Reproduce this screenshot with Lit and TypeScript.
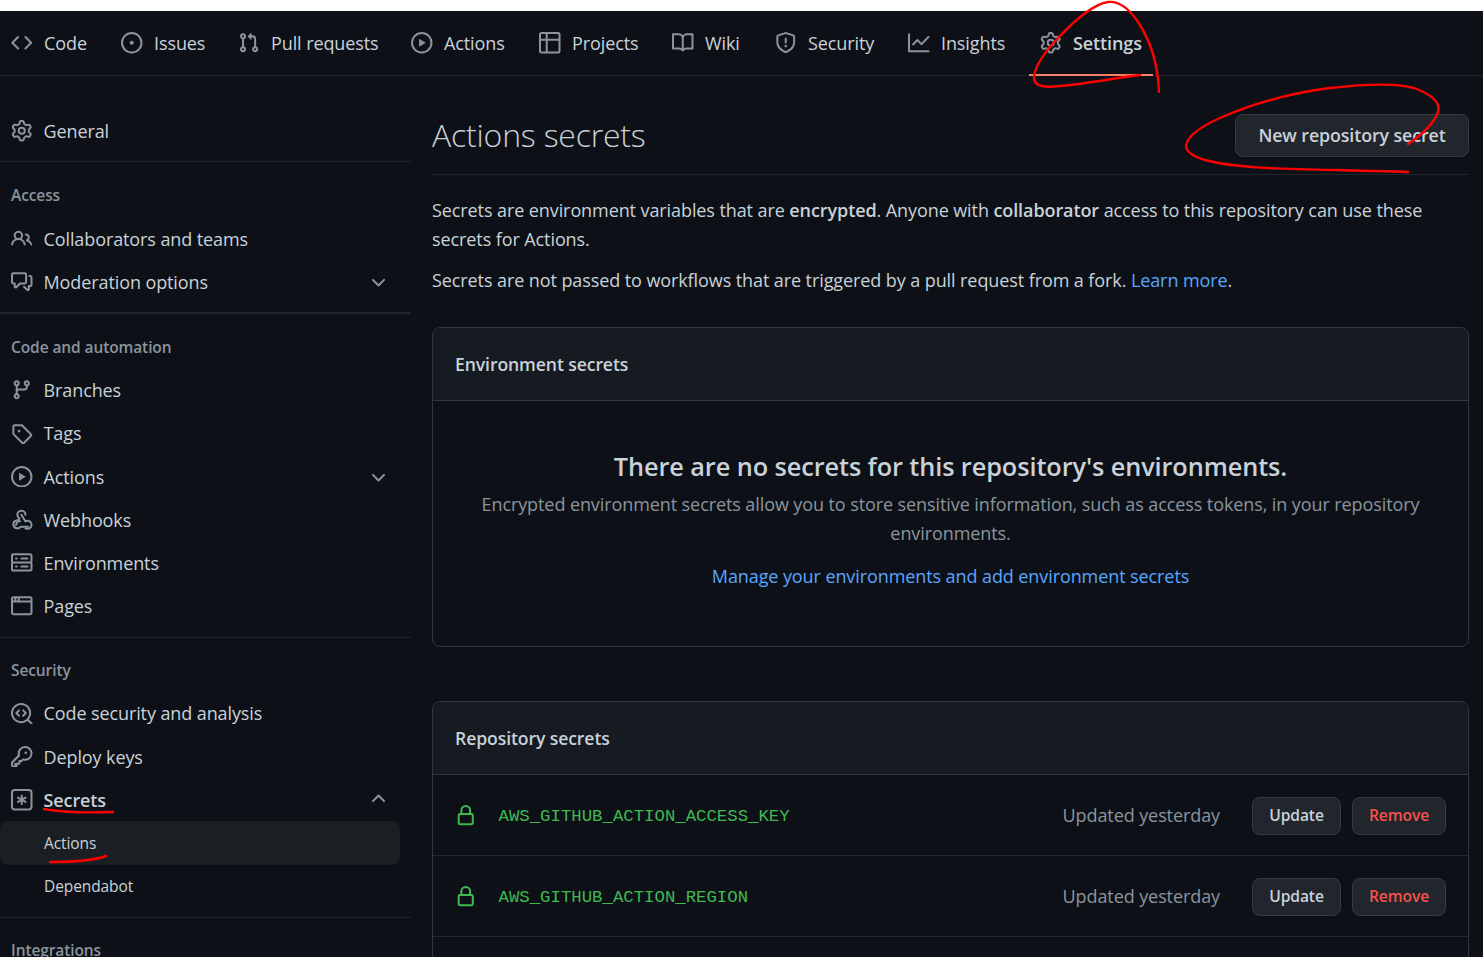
import { LitElement, html, css, svg } from "lit";
import { customElement } from "lit/decorators.js";

const I: Record<string, any> = {
  code: svg`<path d="M4.72 3.22a.75.75 0 011.06 1.06L2.06 8l3.72 3.72a.75.75 0 11-1.06 1.06L.47 8.53a.75.75 0 010-1.06l4.25-4.25zm6.56 0a.75.75 0 10-1.06 1.06L13.94 8l-3.72 3.72a.75.75 0 101.06 1.06l4.25-4.25a.75.75 0 000-1.06l-4.25-4.25z"/>`,
  issue: svg`<path d="M8 9.5a1.5 1.5 0 100-3 1.5 1.5 0 000 3z"/><path fill-rule="evenodd" d="M8 0a8 8 0 100 16A8 8 0 008 0zM1.5 8a6.5 6.5 0 1113 0 6.5 6.5 0 01-13 0z"/>`,
  pr: svg`<path fill-rule="evenodd" d="M7.177 3.073L9.573.677A.25.25 0 0110 .854v4.792a.25.25 0 01-.427.177L7.177 3.427a.25.25 0 010-.354zM3.75 2.5a.75.75 0 100 1.5.75.75 0 000-1.5zm-2.25.75a2.25 2.25 0 113 2.122v5.256a2.251 2.251 0 11-1.5 0V5.372A2.25 2.25 0 011.5 3.25zM11 2.5h-1V4h1a1 1 0 011 1v5.628a2.251 2.251 0 101.5 0V5A2.5 2.5 0 0011 2.5zm1 10.25a.75.75 0 111.5 0 .75.75 0 01-1.5 0zM3.75 12a.75.75 0 100 1.5.75.75 0 000-1.5z"/>`,
  play: svg`<path fill-rule="evenodd" d="M1.5 8a6.5 6.5 0 1113 0 6.5 6.5 0 01-13 0zM8 0a8 8 0 100 16A8 8 0 008 0zM6.379 5.227A.25.25 0 006 5.442v5.117a.25.25 0 00.379.214l4.264-2.559a.25.25 0 000-.428L6.379 5.227z"/>`,
  table: svg`<path fill-rule="evenodd" d="M0 1.75C0 .784.784 0 1.75 0h12.5C15.216 0 16 .784 16 1.75v12.5A1.75 1.75 0 0114.25 16H1.75A1.75 1.75 0 010 14.25V1.75zM1.5 6.5v7.75c0 .138.112.25.25.25H5v-8H1.5zM5 5H1.5V1.75a.25.25 0 01.25-.25H5V5zm1.5 1.5v8h7.75a.25.25 0 00.25-.25V6.5h-8zm8-1.5h-8V1.5h7.75a.25.25 0 01.25.25V5z"/>`,
  book: svg`<path fill-rule="evenodd" d="M0 1.75A.75.75 0 01.75 1h4.253c1.227 0 2.317.59 3 1.501A3.744 3.744 0 0111.006 1h4.245a.75.75 0 01.75.75v10.5a.75.75 0 01-.75.75h-4.507a2.25 2.25 0 00-1.591.659l-.622.621a.75.75 0 01-1.06 0l-.622-.621A2.25 2.25 0 005.258 13H.75a.75.75 0 01-.75-.75V1.75zm8.755 3a2.25 2.25 0 012.25-2.25H14.5v9h-3.757c-.71 0-1.4.201-1.992.572l.004-7.322zm-1.504 7.324l.004-5.073-.002-2.253A2.25 2.25 0 005.003 2.5H1.5v9h3.757a3.75 3.75 0 011.994.574z"/>`,
  shield: svg`<path fill-rule="evenodd" d="M7.467.133a1.75 1.75 0 011.066 0l5.25 1.68A1.75 1.75 0 0115 3.48V7c0 1.566-.32 3.182-1.303 4.682-.983 1.498-2.585 2.813-5.032 3.855a1.7 1.7 0 01-1.33 0c-2.447-1.042-4.049-2.357-5.032-3.855C1.32 10.182 1 8.566 1 7V3.48a1.75 1.75 0 011.217-1.667l5.25-1.68zm.61 1.429a.25.25 0 00-.153 0l-5.25 1.68a.25.25 0 00-.174.238V7c0 1.358.275 2.666 1.057 3.86.784 1.194 2.121 2.34 4.366 3.297a.2.2 0 00.154 0c2.245-.956 3.582-2.104 4.366-3.298C13.225 9.666 13.5 8.36 13.5 7V3.48a.25.25 0 00-.174-.237l-5.25-1.68zM9 10.5a1 1 0 11-2 0 1 1 0 012 0zm-.25-5.75a.75.75 0 10-1.5 0v3a.75.75 0 001.5 0v-3z"/>`,
  graph: svg`<path fill-rule="evenodd" d="M1.5 1.75a.75.75 0 00-1.5 0v12.5c0 .414.336.75.75.75h14.5a.75.75 0 000-1.5H1.5V1.75zm14.28 2.53a.75.75 0 00-1.06-1.06L10 7.94 7.53 5.47a.75.75 0 00-1.06 0L3.22 8.72a.75.75 0 001.06 1.06L7 7.06l2.47 2.47a.75.75 0 001.06 0l5.25-5.25z"/>`,
  gear: svg`<path fill-rule="evenodd" d="M7.429 1.525a6.593 6.593 0 011.142 0c.036.003.108.036.137.146l.289 1.105c.147.56.55.967.997 1.189.174.086.341.183.501.29.417.278.97.423 1.53.27l1.102-.303c.11-.03.175.016.195.046.219.31.41.641.573.989.014.031.022.11-.059.19l-.815.806c-.411.406-.562.957-.53 1.456a4.588 4.588 0 010 .582c-.032.499.119 1.05.53 1.456l.815.806c.08.08.073.159.059.19a6.494 6.494 0 01-.573.99c-.02.029-.086.074-.195.045l-1.103-.303c-.559-.153-1.112-.008-1.529.27-.16.107-.327.204-.5.29-.449.222-.851.628-.998 1.189l-.289 1.105c-.029.11-.101.143-.137.146a6.613 6.613 0 01-1.142 0c-.036-.003-.108-.037-.137-.146l-.289-1.105c-.147-.56-.55-.967-.997-1.189a4.502 4.502 0 01-.501-.29c-.417-.278-.97-.423-1.53-.27l-1.102.303c-.11.03-.175-.016-.195-.046a6.492 6.492 0 01-.573-.989c-.014-.031-.022-.11.059-.19l.815-.806c.411-.406.562-.957.53-1.456a4.587 4.587 0 010-.582c.032-.499-.119-1.05-.53-1.456l-.815-.806c-.08-.08-.073-.159-.059-.19a6.44 6.44 0 01.573-.99c.02-.029.086-.075.195-.045l1.103.303c.559.153 1.112.008 1.529-.27.16-.107.327-.204.5-.29.449-.222.851-.628.998-1.189l.289-1.105c.029-.11.101-.143.137-.146zM8 0c-.236 0-.47.01-.701.03-.743.065-1.29.615-1.458 1.261l-.29 1.106c-.017.066-.078.158-.211.224a5.994 5.994 0 00-.668.386c-.123.082-.233.09-.3.071L3.27 2.776c-.644-.177-1.392.02-1.82.63a7.977 7.977 0 00-.704 1.217c-.315.675-.111 1.422.363 1.891l.815.806c.05.048.098.147.088.294a6.084 6.084 0 000 .772c.01.147-.038.246-.088.294l-.815.806c-.474.469-.678 1.216-.363 1.891.2.428.436.835.704 1.218.428.609 1.176.806 1.82.63l1.103-.303c.066-.019.176-.011.299.071.213.143.436.272.668.386.133.066.194.158.212.224l.289 1.106c.169.646.715 1.196 1.458 1.26a8.094 8.094 0 001.402 0c.743-.064 1.29-.614 1.458-1.26l.29-1.106c.017-.066.078-.158.211-.224a5.98 5.98 0 00.668-.386c.123-.082.233-.09.3-.071l1.102.302c.644.177 1.392-.02 1.82-.63.268-.382.505-.789.704-1.217.315-.675.111-1.422-.364-1.891l-.814-.806c-.05-.048-.098-.147-.088-.294a6.1 6.1 0 000-.772c-.01-.147.039-.246.088-.294l.814-.806c.475-.469.679-1.216.364-1.891a7.992 7.992 0 00-.704-1.218c-.428-.609-1.176-.806-1.82-.63l-1.103.303c-.066.019-.176.011-.299-.071a5.991 5.991 0 00-.668-.386c-.133-.066-.194-.158-.212-.224L10.16 1.29C9.99.645 9.444.095 8.701.031A8.094 8.094 0 008 0zm1.5 8a1.5 1.5 0 11-3 0 1.5 1.5 0 013 0zM11 8a3 3 0 11-6 0 3 3 0 016 0z"/>`,
  people: svg`<path fill-rule="evenodd" d="M5.5 3.5a2 2 0 100 4 2 2 0 000-4zM2 5.5a3.5 3.5 0 115.898 2.549 5.507 5.507 0 013.034 4.084.75.75 0 11-1.482.235 4.001 4.001 0 00-7.9 0 .75.75 0 01-1.482-.236A5.507 5.507 0 013.102 8.05 3.49 3.49 0 012 5.5zM11 4a.75.75 0 100 1.5 1.5 1.5 0 01.666 2.844.75.75 0 00-.416.672v.352a.75.75 0 00.574.73c1.2.289 2.162 1.2 2.522 2.372a.75.75 0 101.434-.44 5.01 5.01 0 00-2.56-3.012A3 3 0 0011 4z"/>`,
  comment: svg`<path fill-rule="evenodd" d="M1.5 2.75a.25.25 0 01.25-.25h8.5a.25.25 0 01.25.25v5.5a.25.25 0 01-.25.25h-3.5a.75.75 0 00-.53.22L3.5 11.44V9.25a.75.75 0 00-.75-.75h-1a.25.25 0 01-.25-.25v-5.5zM1.75 1A1.75 1.75 0 000 2.75v5.5C0 9.216.784 10 1.75 10H2v1.543a1.457 1.457 0 002.487 1.03L7.061 10h3.189A1.75 1.75 0 0012 8.25v-5.5A1.75 1.75 0 0010.25 1h-8.5zM14.5 4.75a.25.25 0 00-.25-.25h-.5a.75.75 0 110-1.5h.5c.966 0 1.75.784 1.75 1.75v5.5A1.75 1.75 0 0114.25 12H14v1.543a1.457 1.457 0 01-2.487 1.03L9.22 12.28a.75.75 0 111.06-1.06l2.22 2.22v-2.19a.75.75 0 01.75-.75h1a.25.25 0 00.25-.25v-5.5z"/>`,
  branch: svg`<path fill-rule="evenodd" d="M11.75 2.5a.75.75 0 100 1.5.75.75 0 000-1.5zm-2.25.75a2.25 2.25 0 113 2.122V6A2.5 2.5 0 0110 8.5H6a1 1 0 00-1 1v1.128a2.251 2.251 0 11-1.5 0V5.372a2.25 2.25 0 111.5 0v1.836A2.492 2.492 0 016 7h4a1 1 0 001-1v-.628A2.25 2.25 0 019.5 3.25zM4.25 12a.75.75 0 100 1.5.75.75 0 000-1.5zM3.5 3.25a.75.75 0 111.5 0 .75.75 0 01-1.5 0z"/>`,
  tag: svg`<path fill-rule="evenodd" d="M2.5 7.775V2.75a.25.25 0 01.25-.25h5.025a.25.25 0 01.177.073l6.25 6.25a.25.25 0 010 .354l-5.025 5.025a.25.25 0 01-.354 0l-6.25-6.25a.25.25 0 01-.073-.177zm-1.5 0V2.75C1 1.784 1.784 1 2.75 1h5.025c.464 0 .91.184 1.238.513l6.25 6.25a1.75 1.75 0 010 2.474l-5.026 5.026a1.75 1.75 0 01-2.474 0l-6.25-6.25A1.75 1.75 0 011 7.775zM6 5a1 1 0 100 2 1 1 0 000-2z"/>`,
  webhook: svg`<path d="M5.5 4.25a2.25 2.25 0 014.5 0 .75.75 0 001.5 0 3.75 3.75 0 10-6.14 2.889l-2.272 4.258a.75.75 0 001.324.706L7 7.25a.75.75 0 00-.309-1.015A2.25 2.25 0 015.5 4.25z"/><path d="M7.364 3.607a.75.75 0 011.03.257l2.608 4.349a3.75 3.75 0 11-.628 6.785.75.75 0 01.752-1.299 2.25 2.25 0 10-.033-3.88.75.75 0 01-1.03-.256L7.107 4.636a.75.75 0 01.257-1.03z"/><path d="M2.5 11.5a2.25 2.25 0 013.75-1.677.75.75 0 001-1.118A3.75 3.75 0 001 11.5a3.75 3.75 0 006.5 2.5h5.25a.75.75 0 000-1.5H7a.75.75 0 00-.7.48A2.25 2.25 0 012.5 11.5z"/>`,
  server: svg`<path fill-rule="evenodd" d="M1.75 1A1.75 1.75 0 000 2.75v4c0 .372.116.717.314 1a1.742 1.742 0 00-.314 1v4c0 .966.784 1.75 1.75 1.75h12.5A1.75 1.75 0 0016 12.75v-4c0-.372-.116-.717-.314-1 .198-.283.314-.628.314-1v-4A1.75 1.75 0 0014.25 1H1.75zm0 7.5a.25.25 0 00-.25.25v4c0 .138.112.25.25.25h12.5a.25.25 0 00.25-.25v-4a.25.25 0 00-.25-.25H1.75zM1.5 2.75a.25.25 0 01.25-.25h12.5a.25.25 0 01.25.25v4a.25.25 0 01-.25.25H1.75a.25.25 0 01-.25-.25v-4zm5.5 2A.75.75 0 017.75 4h4.5a.75.75 0 010 1.5h-4.5A.75.75 0 017 4.75zM7.75 10a.75.75 0 000 1.5h4.5a.75.75 0 000-1.5h-4.5zM3 4.75A.75.75 0 013.75 4h.5a.75.75 0 010 1.5h-.5A.75.75 0 013 4.75zM3.75 10a.75.75 0 000 1.5h.5a.75.75 0 000-1.5h-.5z"/>`,
  browser: svg`<path fill-rule="evenodd" d="M0 2.75C0 1.784.784 1 1.75 1h12.5c.966 0 1.75.784 1.75 1.75v10.5A1.75 1.75 0 0114.25 15H1.75A1.75 1.75 0 010 13.25V2.75zm1.75-.25a.25.25 0 00-.25.25V4h1V2.5h-.75zM4 2.5V4h1V2.5H4zm2.5 0V4h8V2.75a.25.25 0 00-.25-.25H6.5zM14.5 5.5h-13v7.75c0 .138.112.25.25.25h12.5a.25.25 0 00.25-.25V5.5z"/>`,
  scan: svg`<path d="M8.47 4.97a.75.75 0 000 1.06L9.94 7.5 8.47 8.97a.75.75 0 101.06 1.06l2-2a.75.75 0 000-1.06l-2-2a.75.75 0 00-1.06 0zM6.53 6.03a.75.75 0 00-1.06-1.06l-2 2a.75.75 0 000 1.06l2 2a.75.75 0 101.06-1.06L5.06 7.5l1.47-1.47z"/><path fill-rule="evenodd" d="M12.246 13.307a7.5 7.5 0 111.06-1.06l2.474 2.473a.75.75 0 11-1.06 1.06l-2.474-2.473zM1.5 7.5a6 6 0 1110.386 4.094.75.75 0 00-.292.293A6 6 0 011.5 7.5z"/>`,
  key: svg`<path fill-rule="evenodd" d="M6.5 5.5a4 4 0 112.731 3.795.75.75 0 00-.768.18L7.44 10.5H6.25a.75.75 0 00-.75.75v1.19l-.06.06H3.25a.75.75 0 00-.75.75v1.19l-.06.06H1.75a.25.25 0 01-.25-.25v-1.69l5.024-5.023a.75.75 0 00.181-.768A3.995 3.995 0 016.5 5.5zm4-5.5a5.5 5.5 0 00-5.348 6.788L.22 11.72a.75.75 0 00-.22.53v2C0 15.216.784 16 1.75 16h2a.75.75 0 00.53-.22l.5-.5a.75.75 0 00.22-.53V14h.75a.75.75 0 00.53-.22l.5-.5a.75.75 0 00.22-.53V12h.75a.75.75 0 00.53-.22l.932-.932A5.5 5.5 0 1010.5 0zm.5 6a1 1 0 100-2 1 1 0 000 2z"/>`,
  asterisk: svg`<path fill-rule="evenodd" d="M0 2.75A2.75 2.75 0 012.75 0h10.5A2.75 2.75 0 0116 2.75v10.5A2.75 2.75 0 0113.25 16H2.75A2.75 2.75 0 010 13.25V2.75zM2.75 1.5c-.69 0-1.25.56-1.25 1.25v10.5c0 .69.56 1.25 1.25 1.25h10.5c.69 0 1.25-.56 1.25-1.25V2.75c0-.69-.56-1.25-1.25-1.25H2.75z"/><path d="M8 4a.75.75 0 01.75.75V6.7l1.69-.975a.75.75 0 01.75 1.3L9.5 8l1.69.976a.75.75 0 01-.75 1.298L8.75 9.3v1.951a.75.75 0 01-1.5 0V9.299l-1.69.975a.75.75 0 01-.75-1.298L6.5 8l-1.69-.975a.75.75 0 01.75-1.3l1.69.976V4.75A.75.75 0 018 4z"/>`,
  lock: svg`<path fill-rule="evenodd" d="M4 4v2h-.25A1.75 1.75 0 002 7.75v5.5c0 .966.784 1.75 1.75 1.75h8.5A1.75 1.75 0 0014 13.25v-5.5A1.75 1.75 0 0012.25 6H12V4a4 4 0 10-8 0zm6.5 2V4a2.5 2.5 0 00-5 0v2h5zM12 7.5h.25a.25.25 0 01.25.25v5.5a.25.25 0 01-.25.25h-8.5a.25.25 0 01-.25-.25v-5.5a.25.25 0 01.25-.25H12z"/>`,
  down: svg`<path fill-rule="evenodd" d="M12.78 6.22a.75.75 0 010 1.06l-4.25 4.25a.75.75 0 01-1.06 0L3.22 7.28a.75.75 0 011.06-1.06L8 9.94l3.72-3.72a.75.75 0 011.06 0z"/>`,
  up: svg`<path fill-rule="evenodd" d="M3.22 9.78a.75.75 0 010-1.06l4.25-4.25a.75.75 0 011.06 0l4.25 4.25a.75.75 0 01-1.06 1.06L8 6.06 4.28 9.78a.75.75 0 01-1.06 0z"/>`,
};

const icon = (n: string) => html`<svg class="ico" viewBox="0 0 16 16" aria-hidden="true">${I[n]}</svg>`;

const tabs: [string, string, number][] = [
  ["code", "Code", 43], ["issue", "Issues", 50], ["pr", "Pull requests", 106], ["play", "Actions", 61], ["table", "Projects", 66],
  ["book", "Wiki", 36], ["shield", "Security", 66], ["graph", "Insights", 65], ["gear", "Settings", 69],
];

type Row = { i?: string; t: string; c?: string; cls?: string };
const groups: { h?: string; rows: Row[] }[] = [
  { rows: [{ i: "gear", t: "General" }] },
  { h: "Access", rows: [{ i: "people", t: "Collaborators and teams" }, { i: "comment", t: "Moderation options", c: "down" }] },
  { h: "Code and automation", rows: [
    { i: "branch", t: "Branches" }, { i: "tag", t: "Tags" }, { i: "play", t: "Actions", c: "down" },
    { i: "webhook", t: "Webhooks" }, { i: "server", t: "Environments" }, { i: "browser", t: "Pages" }] },
  { h: "Security", rows: [
    { i: "scan", t: "Code security and analysis" }, { i: "key", t: "Deploy keys" },
    { i: "asterisk", t: "Secrets", c: "up", cls: "strong" },
    { t: "Actions", cls: "sub sel" }, { t: "Dependabot", cls: "sub" }] },
  { h: "Integrations", rows: [] },
];

const secrets = ["AWS_GITHUB_ACTION_ACCESS_KEY", "AWS_GITHUB_ACTION_REGION"];

@customElement("app-root")
export class AppRoot extends LitElement {
  static styles = css`
    :host {
      display: block; position: relative; height: 957px; overflow: hidden;
      background: #0d1117; color: #c9d1d9;
      font-family: "Open Sans", "Noto Sans", sans-serif; font-size: 18px; letter-spacing: -0.1px;
    }
    * { box-sizing: border-box; }
    .ico { width: 21.5px; height: 21.5px; fill: #8b949e; flex: none; display: block; }
    .topstrip { height: 11px; background: #fff; }
    nav.tabs {
      height: 65px; display: flex; gap: 12px; align-items: stretch;
      border-bottom: 1.5px solid #21262d;
    }
    .tab { display: flex; align-items: center; gap: 11.5px; padding: 0 11px; position: relative; white-space: nowrap; }
    .tab.on { font-weight: 600; }
    .tab.on::after { content: ""; position: absolute; left: 0; right: 0; bottom: -1px; height: 2px; background: #f78166; }
    .layout { display: flex; gap: 21px; padding-right: 14px; padding-top: 34px; }
    aside { width: 411px; flex: none; margin-top: -0.4px; }
    .group { padding-bottom: 9px; border-bottom: 1px solid #21262d; margin-bottom: 11px; }
    .group:first-child { padding-bottom: 8px; margin-bottom: 12px; }
    .group.last { border: 0; }
    .group.thick { border-bottom-width: 2px; }
    .heading { height: 43.2px; display: flex; align-items: center; padding-left: 11px; font-size: 15.5px; font-weight: 600; color: #8b949e; }
    .row { height: 43.2px; width: 400px; display: flex; align-items: center; gap: 11px; padding: 0 11px; border-radius: 8px; white-space: nowrap; }
    .row .name { flex: 1; }
    .row .chev { width: 21px; height: 21px; fill: #8b949e; }
    .row.strong .name { font-weight: 600; }
    .row.sub { padding-left: 44px; font-size: 15.5px; }
    .row.sel { background: #1a1f24; }
    main { flex: 1; min-width: 0; letter-spacing: -0.09px; }
    .head {
      display: flex; justify-content: space-between; align-items: flex-start;
      height: 65px; padding-top: 4px; border-bottom: 1px solid #21262d;
    }
    h1 { margin: 0; font-size: 32px; line-height: 41px; font-weight: 300; color: #c9d1d9; letter-spacing: -0.2px; }
    .btn {
      background: #21262d; border: 1.3px solid #363b42; border-radius: 8px; color: #c9d1d9;
      font-weight: 600; display: flex; align-items: center; justify-content: center; white-space: nowrap;
    }
    .btn.big { width: 234px; height: 43px; font-size: 17.8px; padding-bottom: 2px; }
    p { margin: 0; line-height: 29px; }
    .intro { padding-top: 21px; display: flex; flex-direction: column; gap: 12px; }
    a { color: #58a6ff; text-decoration: none; }
    b { font-weight: 600; }
    .box { border: 1px solid #30363d; border-radius: 8px; }
    .box-h { height: 73px; background: #161b22; border-bottom: 1px solid #30363d; border-radius: 8px 8px 0 0; padding-left: 22px; display: flex; align-items: center; font-weight: 600; font-size: 17.6px; letter-spacing: -0.1px; }
    .env { margin-top: 32px; height: 320px; }
    .blank { text-align: center; padding: 47px 40px 0; }
    .blank h3 { margin: 0 0 6px; font-size: 25.3px; font-weight: 600; line-height: 36px; }
    .blank p { color: #8b949e; }
    .blank .link { margin-top: 14px; }
    .repo { margin-top: 54px; min-height: 400px; }
    .sec { height: 81px; border-bottom: 1px solid #21262d; display: flex; align-items: center; padding: 2px 22px 0; }
    .sec .ico { fill: #3fb950; }
    .sec .mono { font-family: "Liberation Mono", monospace; font-size: 17.33px; letter-spacing: 0; color: #3fb950; margin-left: 22px; flex: 1; }
    .sec .when { color: #8b949e; margin-right: 32px; padding-bottom: 2px; }
    .sec .btn { height: 38px; font-size: 15.6px; font-weight: 600; padding-bottom: 2px; }
    .upd { width: 89px; margin-right: 11px; }
    .rem { width: 94px; color: #f85149 !important; }
    svg.ink { position: absolute; inset: 0; width: 1483px; height: 957px; pointer-events: none; }
    svg.ink path { fill: none; stroke: #f00; stroke-width: 2.4; stroke-linecap: round; stroke-linejoin: round; }
  `;

  render() {
    return html`
      <div class="topstrip"></div>
      <nav class="tabs">
        ${tabs.map(([i, t, w]) => html`<div class="tab ${t === "Settings" ? "on" : ""}">${icon(i)}<span style="width:${w}px">${t}</span></div>`)}
      </nav>
      <div class="layout">
        <aside>
          ${groups.map((g, idx) => html`
            <div class="group ${idx === groups.length - 1 ? "last" : ""} ${idx === 1 ? "thick" : ""}">
              ${g.h ? html`<div class="heading">${g.h}</div>` : ""}
              ${g.rows.map((r) => html`
                <div class="row ${r.cls ?? ""}">
                  ${r.i ? icon(r.i) : ""}
                  <span class="name">${r.t}</span>
                  ${r.c ? html`<svg class="ico chev" viewBox="0 0 16 16">${I[r.c]}</svg>` : ""}
                </div>`)}
            </div>`)}
        </aside>
        <main>
          <div class="head">
            <h1>Actions secrets</h1>
            <div class="btn big">New repository secret</div>
          </div>
          <div class="intro">
            <p>Secrets are environment variables that are <b>encrypted</b>. Anyone with <b>collaborator</b> access to this repository can use these secrets for Actions.</p>
            <p>Secrets are not passed to workflows that are triggered by a pull request from a fork. <a>Learn more</a>.</p>
          </div>
          <section class="box env">
            <div class="box-h">Environment secrets</div>
            <div class="blank">
              <h3>There are no secrets for this repository's environments.</h3>
              <p>Encrypted environment secrets allow you to store sensitive information, such as access tokens, in your repository environments.</p>
              <p class="link"><a>Manage your environments and add environment secrets</a></p>
            </div>
          </section>
          <section class="box repo">
            <div class="box-h">Repository secrets</div>
            ${secrets.map((s) => html`
              <div class="sec">
                ${icon("lock")}
                <span class="mono">${s}</span>
                <span class="when">Updated yesterday</span>
                <div class="btn upd">Update</div>
                <div class="btn rem">Remove</div>
              </div>`)}
          </section>
        </main>
      </div>
      <svg class="ink" viewBox="0 0 1483 957">
        <path d="M1159 92C1158 65 1150 40 1138 22C1128 7 1118 1 1108 2C1094 4 1075 20 1058 38C1044 53 1034 68 1034 78C1034 86 1044 88 1060 86C1085 84 1115 78 1140 75"/>
        <path d="M1408 144C1420 136 1433 126 1438 112C1441 102 1430 94 1414 88C1396 83 1365 84 1330 88C1290 93 1250 105 1220 118C1200 127 1187 137 1186 146C1186 152 1192 156 1205 160C1235 168 1280 169 1337 170C1365 171 1390 171 1408 172"/>
        <path d="M44 809C60 812 85 813 113 812"/>
        <path d="M50 862C68 862 92 861 106 856"/>
      </svg>
    `;
  }
}
